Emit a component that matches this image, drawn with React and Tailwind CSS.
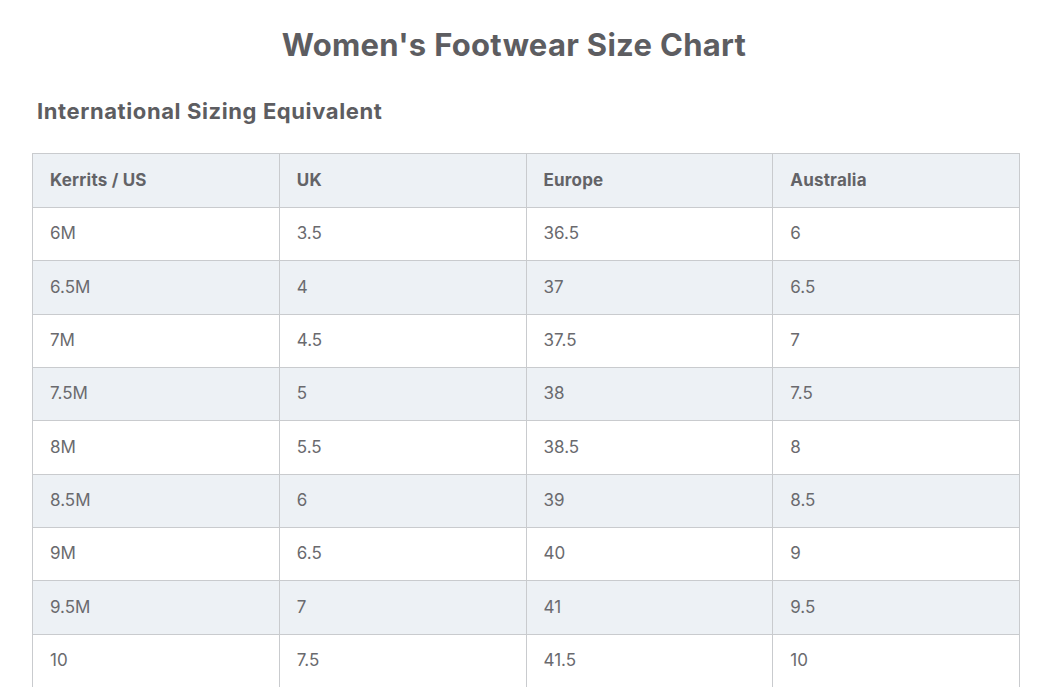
import React from "react";

const rows = [
  ["6M", "3.5", "36.5", "6"],
  ["6.5M", "4", "37", "6.5"],
  ["7M", "4.5", "37.5", "7"],
  ["7.5M", "5", "38", "7.5"],
  ["8M", "5.5", "38.5", "8"],
  ["8.5M", "6", "39", "8.5"],
  ["9M", "6.5", "40", "9"],
  ["9.5M", "7", "41", "9.5"],
  ["10", "7.5", "41.5", "10"],
];

const headers = ["Kerrits / US", "UK", "Europe", "Australia"];

export default function App() {
  return (
    <div className="w-[1040px] h-[687px] overflow-hidden bg-white text-[#66666a] font-['Inter',sans-serif]">
      <h1 className="pt-[26px] pr-[12px] text-center text-[31px] leading-[38px] tracking-[0.3px] font-bold text-[#5d5d61]">
        Women's Footwear Size Chart
      </h1>
      <h2 className="mt-[34px] ml-[37px] text-[22px] leading-[26px] tracking-[0.6px] font-bold text-[#5d5d61]">
        International Sizing Equivalent
      </h2>
      <table className="mt-[29px] ml-[32px] w-[988px] border-collapse table-fixed">
        <thead>
          <tr className="h-[54px] bg-[#edf1f5]">
            {headers.map((h, i) => (
              <th
                key={i}
                className="border border-[#c9cbce] px-[17px] text-left text-[17px] tracking-[0.2px] font-bold text-[#636367]"
              >
                {h}
              </th>
            ))}
          </tr>
        </thead>
        <tbody>
          {rows.map((r, i) => (
            <tr key={i} className={"h-[53.33px] " + (i % 2 === 1 ? "bg-[#edf1f5]" : "bg-white")}>
              {r.map((c, j) => (
                <td key={j} className="border border-[#c9cbce] px-[17px] text-[17px] text-[#6a6a6e]">
                  {c}
                </td>
              ))}
            </tr>
          ))}
        </tbody>
      </table>
    </div>
  );
}
